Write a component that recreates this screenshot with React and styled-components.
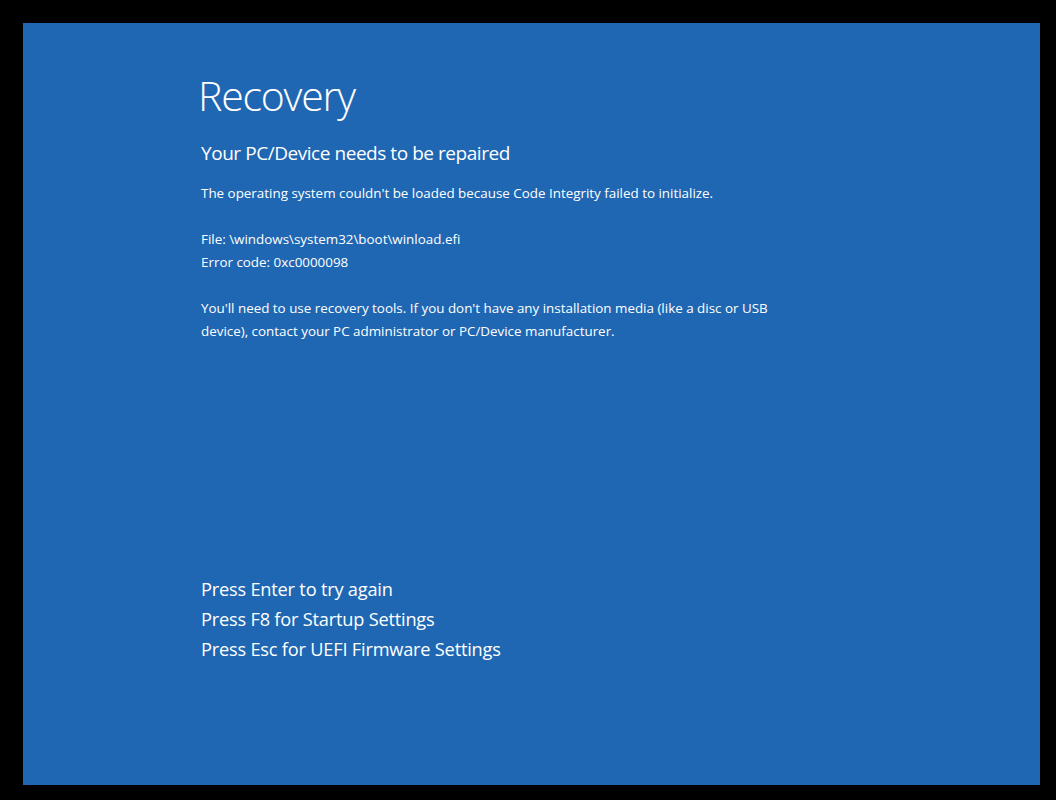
import React from "react";
import styled, { createGlobalStyle } from "styled-components";

const GlobalStyle = createGlobalStyle`
  html, body {
    margin: 0;
    padding: 0;
    background: #000000;
  }
  body {
    font-family: "Open Sans", "Noto Sans", "Liberation Sans", sans-serif;
  }
`;

const Frame = styled.div`
  width: 1056px;
  height: 800px;
  box-sizing: border-box;
  padding: 23px 16px 15px 23px;
  background: #000000;
`;

const Screen = styled.main`
  height: 100%;
  background: #1f67b3;
  color: #ffffff;
  display: flex;
  flex-direction: column;
  padding: 46px 0 0 178px;
  box-sizing: border-box;
`;

const Title = styled.h1`
  font-size: 41px;
  font-weight: 300;
  letter-spacing: -1.2px;
  margin: 0 0 0 -3px;
  line-height: 52px;
`;

const Subtitle = styled.h2`
  font-size: 19px;
  font-weight: 400;
  letter-spacing: -0.45px;
  margin: 19px 0 0;
  line-height: 26px;
`;

const Info = styled.div`
  display: flex;
  flex-direction: column;
  gap: 23px;
  margin-top: 16px;
`;

const Para = styled.p`
  margin: 0;
  font-size: 13.4px;
  line-height: 23px;
  max-width: 580px;
`;

const Keys = styled.div`
  margin-top: auto;
  margin-bottom: 121px;
  display: flex;
  flex-direction: column;
`;

const KeyLine = styled.div`
  font-size: 18.2px;
  letter-spacing: -0.2px;
  line-height: 30px;
`;

export default function App() {
  return (
    <>
      <GlobalStyle />
      <Frame>
        <Screen>
          <Title>Recovery</Title>
          <Subtitle>Your PC/Device needs to be repaired</Subtitle>
          <Info>
            <Para>
              The operating system couldn't be loaded because Code Integrity
              failed to initialize.
            </Para>
            <Para>
              File: \windows\system32\boot\winload.efi
              <br />
              Error code: 0xc0000098
            </Para>
            <Para>
              You'll need to use recovery tools. If you don't have any
              installation media (like a disc or USB device), contact your PC
              administrator or PC/Device manufacturer.
            </Para>
          </Info>
          <Keys>
            <KeyLine>Press Enter to try again</KeyLine>
            <KeyLine>Press F8 for Startup Settings</KeyLine>
            <KeyLine>Press Esc for UEFI Firmware Settings</KeyLine>
          </Keys>
        </Screen>
      </Frame>
    </>
  );
}
